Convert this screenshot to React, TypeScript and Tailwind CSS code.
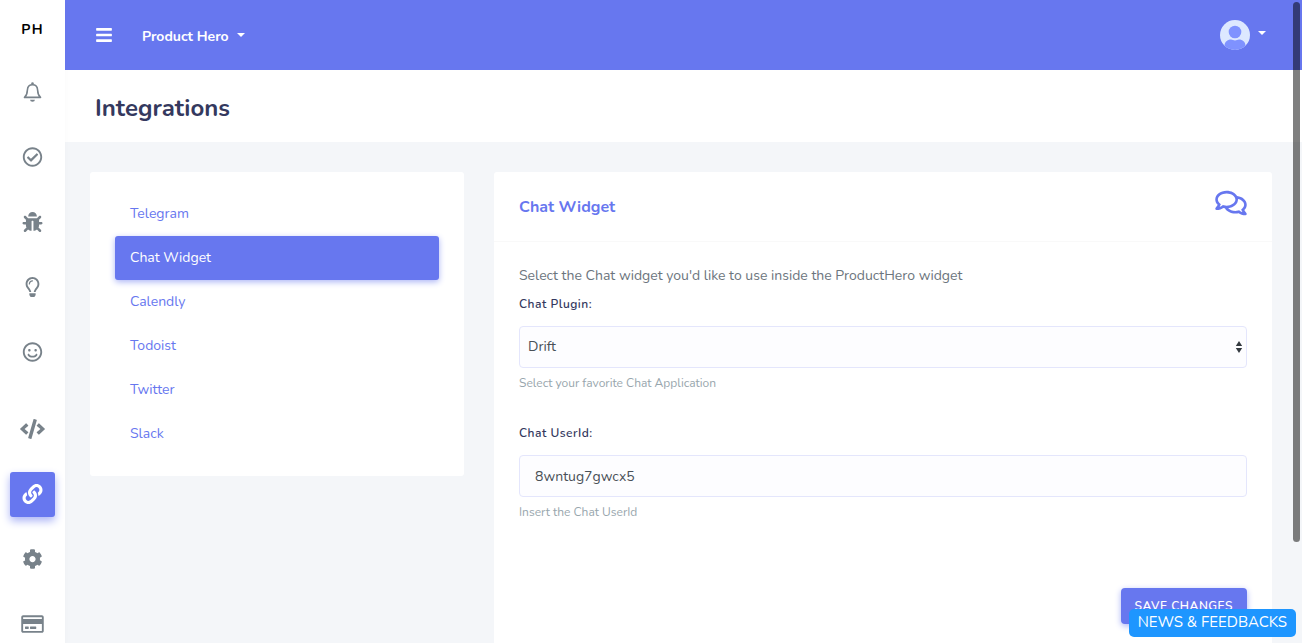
import {
  FaBars,
  FaBug,
  FaCode,
  FaCog,
  FaLink,
  FaRegCheckCircle,
  FaRegComments,
  FaRegCreditCard,
  FaRegLightbulb,
  FaRegSmile,
} from 'react-icons/fa'
import type { ComponentType } from 'react'

type SidebarItem = { label: string; icon: ComponentType<{ className?: string }>; active?: boolean }

function BellIcon({ className }: { className?: string }) {
  return (
    <svg className={className} viewBox="0 0 18 20" fill="none" stroke="currentColor" strokeWidth="1.6" strokeLinejoin="round">
      <path d="M1 15.4h16c-1.6-1.400-2.700-2.800-2.900-7.400C13.900 4.600 12 2.800 9 2.800S4.100 4.600 3.900 8C3.700 12.600 2.600 14 1 15.400z" />
      <circle cx="9" cy="1.500" r="1.300" fill="currentColor" stroke="none" />
      <path d="M6.600 17.700h4.800a2.400 2.100 0 0 1-4.800 0z" fill="currentColor" stroke="none" />
    </svg>
  )
}

const sidebar: SidebarItem[] = [
  { label: 'Notifications', icon: BellIcon },
  { label: 'Tasks', icon: FaRegCheckCircle },
  { label: 'Bugs', icon: FaBug },
  { label: 'Ideas', icon: FaRegLightbulb },
  { label: 'Feedback', icon: FaRegSmile },
]

const sidebarSettings: SidebarItem[] = [
  { label: 'Embed code', icon: FaCode },
  { label: 'Integrations', icon: FaLink, active: true },
  { label: 'Settings', icon: FaCog },
  { label: 'Billing', icon: FaRegCreditCard },
]

const integrations = ['Telegram', 'Chat Widget', 'Calendly', 'Todoist', 'Twitter', 'Slack']

function Caret({ className }: { className?: string }) {
  return (
    <svg className={className} width="8" height="4" viewBox="0 0 8 4" fill="currentColor" aria-hidden="true">
      <path d="M0 0h8L4 4z" />
    </svg>
  )
}

function SidebarGroup({ items }: { items: SidebarItem[] }) {
  return (
    <ul className="flex flex-col gap-5">
      {items.map(({ label, icon: Icon, active }) => (
        <li key={label}>
          <a
            href="#"
            aria-label={label}
            className={
              active
                ? 'flex size-[45px] items-center justify-center rounded-[3px] bg-[#6777ef] text-white shadow-[0_4px_8px_#acb5f6]'
                : 'flex size-[45px] items-center justify-center rounded-[3px] text-[#78828a]'
            }
          >
            <Icon className="mb-px h-5 w-[25px]" />
          </a>
        </li>
      ))}
    </ul>
  )
}

function Avatar() {
  return (
    <svg width="30" height="30" viewBox="0 0 30 30" aria-hidden="true">
      <clipPath id="avatar">
        <circle cx="15" cy="15" r="15" />
      </clipPath>
      <g clipPath="url(#avatar)">
        <rect width="30" height="30" fill="#dde8ff" />
        <circle cx="15" cy="12" r="6.3" fill="#7f92ff" />
        <path d="M4.5 30v-4c0-4 3-6.400 6.500-6.400 1.500 0 2.500.9 4 .9s2.500-.9 4-.9c3.500 0 6.500 2.400 6.500 6.400v4z" fill="#7f92ff" />
      </g>
    </svg>
  )
}

export default function App() {
  return (
    <div className="flex h-screen overflow-hidden bg-[#f4f6f9] font-['Nunito','Lato',sans-serif] text-sm text-[#6c757d]">
      <aside className="z-10 flex w-[65px] shrink-0 flex-col items-center bg-white shadow-[0_4px_8px_rgba(0,0,0,0.03)]">
        <a href="#" className="flex h-[60px] shrink-0 items-center font-bold tracking-widest text-black">
          PH
        </a>
        <nav className="flex flex-col gap-8 pt-2.5">
          <SidebarGroup items={sidebar} />
          <SidebarGroup items={sidebarSettings} />
        </nav>
      </aside>

      <div className="min-w-0 flex-1">
        <header className="flex h-[70px] items-center bg-[#6777ef] pr-9 pl-[31px] text-white">
          <button type="button" aria-label="Toggle sidebar">
            <FaBars className="h-[18px] w-4" />
          </button>
          <button type="button" className="ml-[30px] flex items-center gap-2 pt-1 font-bold">
            Product Hero
            <Caret className="mb-1" />
          </button>
          <button type="button" aria-label="Account" className="ml-auto flex items-center gap-2">
            <Avatar />
            <Caret className="mb-1" />
          </button>
        </header>

        <div className="flex h-[72px] items-center bg-white px-[30px] pt-1">
          <h1 className="text-2xl font-bold text-[#34395e]">Integrations</h1>
        </div>

        <main className="grid grid-cols-3 items-start gap-[30px] pt-[30px] pr-[30px] pl-[25px]">
          <nav className="rounded-[3px] bg-white px-[25px] py-5">
            {integrations.map((name) => (
              <a
                key={name}
                href="#"
                className={
                  name === 'Chat Widget'
                    ? 'flex h-11 items-center rounded-[3px] bg-[#6777ef] px-[15px] text-white shadow-[0_2px_6px_#acb5f6]'
                    : 'flex h-11 items-center rounded-[3px] px-[15px] text-[#6777ef]'
                }
              >
                {name}
              </a>
            ))}
          </nav>

          <form className="col-span-2 rounded-[3px] bg-white">
            <div className="flex h-[70px] items-center justify-between border-b border-[#f9f9f9] px-[25px]">
              <h2 className="text-base font-bold text-[#6777ef]">Chat Widget</h2>
              <FaRegComments className="mb-2 h-7 w-8 text-[#6777ef]" />
            </div>
            <div className="px-[25px] pt-5 pb-[25px]">
              <p className="mb-1 leading-7">Select the Chat widget you'd like to use inside the ProductHero widget</p>

              <div className="mb-[30px]">
                <label htmlFor="plugin" className="mb-3 block text-xs leading-5 font-semibold tracking-[0.5px] text-[#34395e]">
                  Chat Plugin:
                </label>
                <div className="relative">
                  <select
                    id="plugin"
                    className="block h-[42px] w-full appearance-none rounded border border-[#e4e6fc] bg-[#fdfdff] px-2 text-[#495057]"
                  >
                    <option>Drift</option>
                  </select>
                  <svg
                    width="8"
                    height="12"
                    viewBox="0 0 8 12"
                    className="pointer-events-none absolute top-[15px] right-1 text-[#343a40]"
                    fill="currentColor"
                    aria-hidden="true"
                  >
                    <path d="M4 0l3.200 5H.8zM4 12l3.200-5H.8z" />
                  </svg>
                </div>
                <p className="mt-[5px] text-xs leading-5 text-[#98a6ad]">Select your favorite Chat Application</p>
              </div>

              <div className="mb-[30px]">
                <label htmlFor="userid" className="mb-3 block text-xs leading-5 font-semibold tracking-[0.5px] text-[#34395e]">
                  Chat UserId:
                </label>
                <input
                  id="userid"
                  type="text"
                  defaultValue="8wntug7gwcx5"
                  className="block h-[42px] w-full rounded border border-[#e4e6fc] bg-[#fdfdff] px-[15px] text-[#495057]"
                />
                <p className="mt-[5px] text-xs leading-5 text-[#98a6ad]">Insert the Chat UserId</p>
              </div>

              <div className="flex justify-end pt-9">
                <button
                  type="submit"
                  className="h-9 rounded bg-[#6777ef] px-3.5 text-xs font-semibold tracking-[0.5px] text-white shadow-[0_2px_6px_#acb5f6]"
                >
                  SAVE CHANGES
                </button>
              </div>
            </div>
          </form>
        </main>
      </div>

      <button
        type="button"
        className="fixed right-1.5 bottom-1.5 z-20 h-7 rounded-[5px] bg-[#1e96ff] px-[9px] text-[15px] whitespace-nowrap text-white"
      >
        NEWS &amp; FEEDBACKS
      </button>
      <div className="fixed top-0.5 right-0.5 z-30 h-[84vh] w-[7px] rounded-full bg-black/50" />
    </div>
  )
}
